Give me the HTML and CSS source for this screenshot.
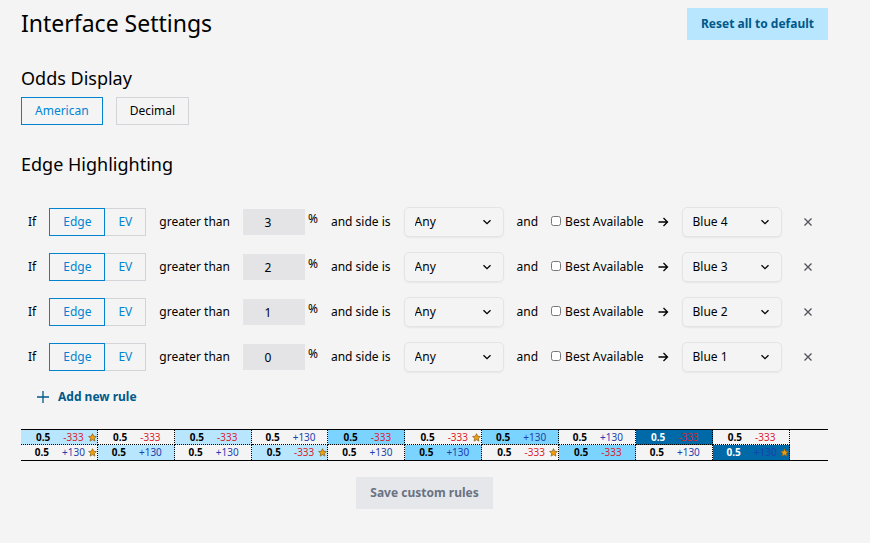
FILE: index.html
```
<!DOCTYPE html>
<html lang="en">
<head>
    <meta charset="UTF-8">
    <meta name="viewport" content="width=device-width, initial-scale=1.0">
    <title>Interface Settings</title>
    <link rel="stylesheet" href="styles.css">
</head>
<body>
    <main class="settings">
        <header class="top">
            <h1>Interface Settings</h1>
            <button class="btn btn-reset" type="button">Reset all to default</button>
        </header>

        <section class="odds">
            <h2>Odds Display</h2>
            <div class="odds-options">
                <button class="option selected" type="button">American</button>
                <button class="option" type="button">Decimal</button>
            </div>
        </section>

        <section class="highlighting">
            <h2>Edge Highlighting</h2>
            <div class="rules" id="rules"></div>
            <button class="add-rule" type="button">
                <svg width="12" height="12" viewBox="0 0 12 12"><path d="M6 0v12M0 6h12" /></svg>
                Add new rule
            </button>
        </section>

        <div class="preview" id="preview"></div>

        <button class="btn btn-save" type="button" disabled>Save custom rules</button>
    </main>

    <script src="script.js"></script>
</body>
</html>
```
FILE: styles.css
```
* {
    box-sizing: border-box;
}

body {
    margin: 0;
    background-color: #f4f4f4;
    color: #000;
    font-family: "Noto Sans", sans-serif;
    font-size: 12px;
    line-height: 20px;
}

button, input, select {
    font: inherit;
    color: inherit;
    margin: 0;
}

button {
    cursor: pointer;
}

.settings {
    display: flex;
    flex-direction: column;
    padding: 8px 42px 20px 21px;
}

.top {
    display: flex;
    justify-content: space-between;
    align-items: center;
}

h1, h2 {
    margin: 0;
    font-weight: 400;
}

h1 {
    font-size: 23px;
    line-height: 30px;
    padding-bottom: 2px;
}

h2 {
    font-size: 18px;
    line-height: 28px;
}

.btn {
    border: none;
    padding: 6px 14px;
    height: 32px;
    font-weight: 700;
}

.btn-reset {
    background-color: #b8e6fe;
    color: #00598a;
}

.btn-save {
    align-self: center;
    margin-top: 16px;
    background-color: #e5e7eb;
    color: #6a7282;
}

.odds {
    margin-top: 24px;
}

.odds-options {
    display: flex;
    gap: 13px;
    margin-top: 5px;
}

.option {
    height: 28px;
    padding: 0 13px;
    border: 1px solid #d4d4d8;
    background: none;
}

.selected {
    border-color: #0084d1;
    color: #0084d1;
}

.highlighting {
    margin-top: 25px;
}

.rules {
    display: flex;
    flex-direction: column;
    gap: 15px;
    margin-top: 29px;
    padding-left: 7px;
}

.rule {
    display: flex;
    align-items: center;
    gap: 13px;
    white-space: nowrap;
}

.toggle {
    display: flex;
}

.toggle .option {
    color: #0084d1;
}

.toggle .option:last-child {
    border-left: none;
}

.amount {
    display: flex;
    gap: 3px;
}

.amount input {
    width: 62px;
    height: 26px;
    padding: 0 0 0 3px;
    border: none;
    background-color: #e4e4e7;
    text-align: center;
}

.rule select {
    width: 100px;
    height: 30px;
    padding: 0 10px;
    border: 1px solid #e4e4e7;
    border-radius: 5px;
    box-shadow: 0 1px 2px rgba(0, 0, 0, 0.06);
    background: none;
    appearance: none;
}

.dropdown {
    display: grid;
    align-items: center;
}

.dropdown select, .dropdown svg {
    grid-area: 1 / 1;
}

.dropdown svg {
    justify-self: end;
    margin-right: 12px;
    pointer-events: none;
}

.best {
    display: flex;
    gap: 4px;
}

.best input {
    width: 10px;
    height: 10px;
    margin-top: 4px;
}

.remove {
    display: flex;
    margin-left: 8px;
    padding: 0;
    border: none;
    background: none;
    color: #52525b;
}

svg {
    flex-shrink: 0;
    fill: none;
    stroke: currentColor;
    stroke-width: 1.3;
}

.add-rule {
    display: flex;
    align-items: center;
    gap: 9px;
    margin: 15px 0 0 16px;
    padding: 0;
    border: none;
    background: none;
    color: #00598a;
    font-weight: 700;
}

.preview {
    display: grid;
    grid-template-columns: repeat(10, 2fr) 1fr;
    grid-template-rows: 15px 15px;
    grid-auto-flow: column;
    margin-top: 22px;
    border-top: 1px solid #000;
    border-bottom: 1px solid #000;
    font-size: 10px;
    line-height: 14px;
}

.cell {
    position: relative;
    display: flex;
    justify-content: center;
    gap: 13px;
    padding-left: 2px;
    border-right: 1px dotted #000;
}

.cell:nth-child(odd) {
    border-bottom: 1px dotted #000;
}

.line {
    font-weight: 700;
}

.minus {
    color: #dc1f2e;
}

.plus {
    color: #1e3fae;
}

.blue1 {
    background-color: #b8e6fe;
}

.blue2 {
    background-color: #7bd3ff;
}

.blue4 {
    background-color: #0069a8;
}

.blue4 .line {
    color: #fff;
}

.star {
    position: absolute;
    top: 3px;
    right: 0;
    fill: #f59e0b;
    stroke: #8a6420;
    stroke-width: 1;
}
```
FILE: script.js
```
const chevron = '<svg width="10" height="10" viewBox="0 0 10 10"><path d="M1.5 3.2L5 6.7l3.5-3.5" /></svg>';
const arrow = '<svg width="12" height="12" viewBox="0 0 12 12"><path d="M1.5 6h9M6.5 2l4 4-4 4" /></svg>';
const cross = '<svg width="10" height="10" viewBox="0 0 10 10"><path d="M1.5 1.5l7 7M8.5 1.5l-7 7" /></svg>';
const star = '<svg class="star" width="9" height="9" viewBox="0 0 12 12"><path d="M6 .9l1.5 3.4 3.7.4-2.8 2.4.8 3.7L6 8.9l-3.2 1.9.8-3.7L.8 4.7l3.7-.4z" /></svg>';

const rules = [
    { amount: 3, color: 'Blue 4' },
    { amount: 2, color: 'Blue 3' },
    { amount: 1, color: 'Blue 2' },
    { amount: 0, color: 'Blue 1' }
];

document.getElementById('rules').innerHTML = rules.map(rule => `
    <div class="rule">
        <span>If</span>
        <div class="toggle">
            <button class="option selected" type="button">Edge</button>
            <button class="option" type="button">EV</button>
        </div>
        <span>greater than</span>
        <label class="amount"><input type="number" value="${rule.amount}">%</label>
        <span>and side is</span>
        <div class="dropdown">
            <select aria-label="Side"><option>Any</option></select>
            ${chevron}
        </div>
        <span>and</span>
        <label class="best"><input type="checkbox">Best Available</label>
        ${arrow}
        <div class="dropdown">
            <select aria-label="Color"><option>${rule.color}</option></select>
            ${chevron}
        </div>
        <button class="remove" type="button" aria-label="Remove rule">${cross}</button>
    </div>`).join('');

// [odds, highlight, starred], top and bottom cell of each column
const cells = [
    ['-333', 'blue1', true], ['+130', '', true],
    ['-333', '', false], ['+130', 'blue1', false],
    ['-333', 'blue1', false], ['+130', '', false],
    ['+130', '', false], ['-333', 'blue1', true],
    ['-333', 'blue2', false], ['+130', '', false],
    ['-333', '', true], ['+130', 'blue2', false],
    ['+130', 'blue2', false], ['-333', '', true],
    ['+130', '', false], ['-333', 'blue2', false],
    ['-333', 'blue4', false], ['+130', '', false],
    ['-333', '', false], ['+130', 'blue4', true]
];

document.getElementById('preview').innerHTML = cells.map(([odds, highlight, starred]) => `
    <div class="cell ${highlight}">
        <span class="line">0.5</span>
        <span class="${odds[0] === '-' ? 'minus' : 'plus'}">${odds}</span>
        ${starred ? star : ''}
    </div>`).join('');
```
